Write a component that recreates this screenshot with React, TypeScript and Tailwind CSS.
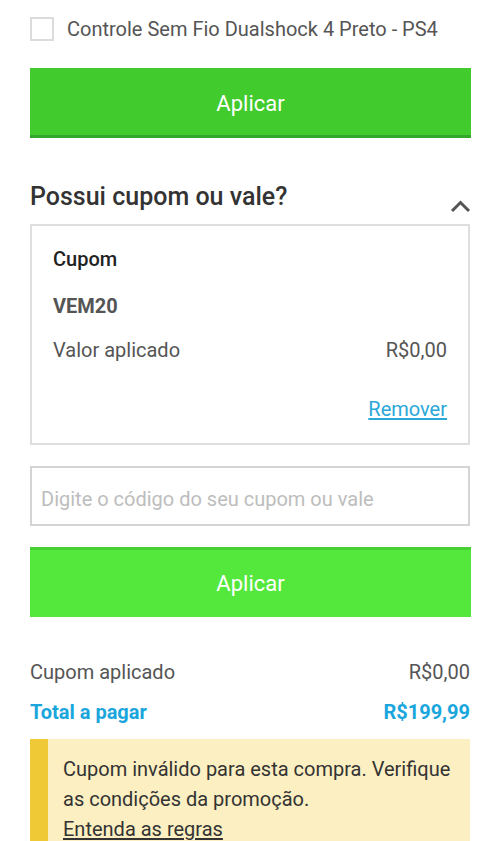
import React from "react";

const App = () => {
  return (
    <div
      className="w-[500px] h-[841px] overflow-hidden bg-white px-[30px]"
      style={{ fontFamily: "Roboto, 'Noto Sans', sans-serif" }}
    >
      {/* produto */}
      <div className="flex items-center pt-[17px] h-[24px] box-content">
        <div className="w-[24px] h-[24px] border-2 border-[#dcdcdc] bg-white shrink-0" />
        <span className="ml-[13px] text-[20px] leading-[24px] text-[#555555]">
          Controle Sem Fio Dualshock 4 Preto - PS4
        </span>
      </div>

      <button className="mt-[27px] w-[441px] h-[70px] bg-[#41cb2c] border-b-[3px] border-[#33a72a] text-white text-[22px] flex items-center justify-center pt-[3px]">
        Aplicar
      </button>

      {/* cupom */}
      <div className="flex items-end justify-between mt-[43px] h-[32px]">
        <h2 className="text-[25px] leading-[32px] font-medium text-[#333333]">
          Possui cupom ou vale?
        </h2>
        <svg
          width="21"
          height="13"
          viewBox="0 0 21 13"
          className="mb-[0px] mr-[-1px]"
        >
          <path
            d="M2 11 L10.5 2.5 L19 11"
            fill="none"
            stroke="#555555"
            strokeWidth="3"
          />
        </svg>
      </div>

      <div className="mt-[11px] w-[440px] h-[221px] border-2 border-[#dedede] px-[21px] pt-[20px]">
        <div className="text-[20px] leading-[26px] font-medium text-[#222222]">Cupom</div>
        <div className="mt-[21px] text-[20px] leading-[26px] font-bold text-[#555555]">VEM20</div>
        <div className="mt-[18px] flex justify-between text-[20px] leading-[26px] text-[#555555]">
          <span>Valor aplicado</span>
          <span>R$0,00</span>
        </div>
        <div className="mt-[33px] flex justify-end">
          <a className="text-[20px] leading-[26px] text-[#2aa8d8] underline underline-offset-2">
            Remover
          </a>
        </div>
      </div>

      <div className="mt-[21px] w-[440px] h-[60px] border-2 border-[#d4d4d4] flex items-center px-[9px] pt-[5px]">
        <span className="text-[20px] text-[#bdbdbd]">Digite o código do seu cupom ou vale</span>
      </div>

      <button className="mt-[21px] w-[441px] h-[70px] bg-[#55e83c] border-t-[3px] border-[#47d032] text-white text-[22px] flex items-center justify-center">
        Aplicar
      </button>

      {/* resumo */}
      <div className="mt-[42px] flex justify-between text-[20px] leading-[26px] text-[#555555]">
        <span>Cupom aplicado</span>
        <span>R$0,00</span>
      </div>
      <div className="mt-[14px] flex justify-between text-[20px] leading-[26px] font-bold text-[#1aa6dc]">
        <span>Total a pagar</span>
        <span>R$199,99</span>
      </div>

      <div className="mt-[14px] w-[440px] flex bg-[#fcefc2]">
        <div className="w-[18px] bg-[#f0c936] shrink-0" />
        <div className="pl-[15px] pr-[10px] pt-[15px] pb-[10px] text-[20px] leading-[30px] text-[#333333]">
          Cupom inválido para esta compra. Verifique as condições da promoção.
          <br />
          <a className="underline underline-offset-2">Entenda as regras</a>
        </div>
      </div>
    </div>
  );
};

export default App;
